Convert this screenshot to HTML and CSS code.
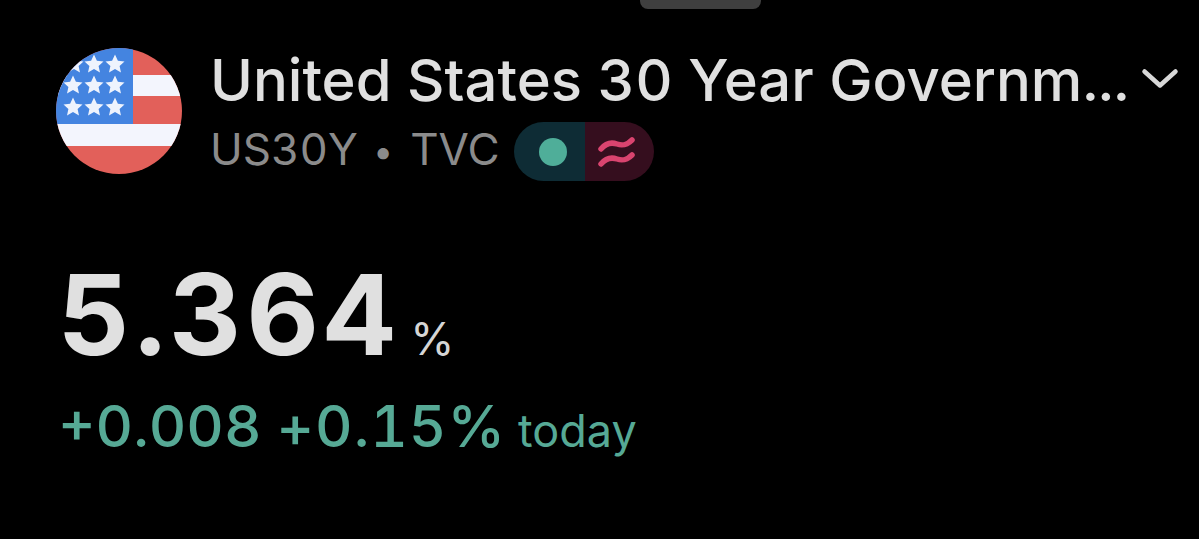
FILE: index.html
```html
<!DOCTYPE html>
<html lang="en">
<head>
<meta charset="utf-8">
<title>US30Y</title>
<link rel="stylesheet" href="styles.css">
</head>
<body>
<div class="handle"></div>
<header class="head">
  <svg class="flag" viewBox="0 0 126 126" aria-hidden="true">
    <defs><clipPath id="c"><circle cx="63" cy="63" r="63"/></clipPath></defs>
    <g clip-path="url(#c)">
      <rect width="126" height="126" fill="#e2605a"/>
      <rect x="0" y="27" width="126" height="21" fill="#f3f5fd"/>
      <rect x="0" y="76" width="126" height="22" fill="#f3f5fd"/>
      <rect width="77" height="76" fill="#4484e0"/>
      <g fill="#eef3fd">
        <path id="s" d="M38 6.5l2.9 6.2 6.6.7-4.9 4.5 1.4 6.6-6-3.4-6 3.4 1.4-6.6-4.9-4.5 6.6-.7z"/>
        <use href="#s" x="21"/><use href="#s" x="-20"/>
        <use href="#s" y="21"/><use href="#s" x="21" y="21"/><use href="#s" x="-21" y="21"/>
        <use href="#s" y="43"/><use href="#s" x="21" y="43"/><use href="#s" x="-21" y="43"/>
      </g>
    </g>
  </svg>
  <div class="titles">
    <div class="title-row">
      <h1 class="title">United States 30 Year Governm...</h1>
      <svg class="chev" viewBox="0 0 38 22" aria-hidden="true"><path d="M3.5 3.5L19 17.5 34.5 3.5"/></svg>
    </div>
    <div class="meta">
      <span class="sym">US30Y</span><span class="dot">•</span><span class="sym">TVC</span>
      <span class="pill">
        <span class="pill-l"><i class="led"></i></span>
        <span class="pill-r">
          <svg class="wave" viewBox="0 0 37 31" aria-hidden="true">
            <path d="M3 13c5-6 10-7 16-5s10 1 15-4"/>
            <path d="M3 28c5-6 10-7 16-5s10 1 15-4"/>
          </svg>
        </span>
      </span>
    </div>
  </div>
</header>
<section class="quote">
  <div class="price"><span class="val">5.364</span><span class="unit">%</span></div>
  <div class="chg"><span>+0.008</span><span class="pct">+0.15%</span><span class="today">today</span></div>
</section>
</body>
</html>
```
FILE: styles.css
```css
* { box-sizing: border-box; }
html, body { margin: 0; height: 100%; }
body {
  background: #000;
  font-family: Inter, "Liberation Sans", sans-serif;
  font-variant-numeric: tabular-nums;
  overflow: hidden;
  display: flex;
  flex-direction: column;
}
.handle {
  width: 121px;
  height: 9px;
  margin-left: 640px;
  background: #3f3f3f;
  border-radius: 0 0 8px 8px;
  flex: none;
}
.head {
  display: flex;
  gap: 28px;
  margin: 39px 0 0 56px;
  align-items: flex-start;
}
.flag { width: 126px; height: 126px; flex: none; }
.titles { display: flex; flex-direction: column; }
.title-row { display: flex; align-items: center; gap: 12px; margin-top: -2px; }
.title {
  margin: 0;
  font-size: 58px;
  line-height: 68px;
  font-weight: 500;
  color: #e0e0e0;
  white-space: nowrap;
}
.chev { width: 38px; height: 22px; margin-bottom: 2px; flex: none; }
.chev path { fill: none; stroke: #d8d8d8; stroke-width: 4.5; stroke-linecap: round; stroke-linejoin: round; }
.meta {
  display: flex;
  align-items: center;
  margin-top: 6px;
  font-size: 44px;
  line-height: 59px;
  color: #8b8b8b;
}
.sym { margin-bottom: 4px; }
.dot { font-size: 36px; margin: 0 17px 0 15px; }
.pill {
  display: flex;
  height: 59px;
  margin-left: 14px;
  border-radius: 30px;
  overflow: hidden;
}
.pill-l {
  width: 71px;
  background: #0e2c35;
  display: flex;
  align-items: center;
  justify-content: center;
  padding-left: 8px;
}
.led { width: 28px; height: 28px; border-radius: 50%; background: #4fae99; }
.pill-r {
  width: 69px;
  background: #350e1e;
  display: flex;
  align-items: center;
  padding-left: 13px;
}
.wave { width: 37px; height: 31px; }
.wave path { fill: none; stroke: #d9446f; stroke-width: 5.5; stroke-linecap: round; }
.quote { margin: 71px 0 0 58px; }
.price { display: flex; align-items: baseline; gap: 10px; }
.val { font-size: 112px; line-height: 120px; font-weight: 700; letter-spacing: 4.5px; color: #e0e0e0; }
.unit { font-size: 45px; color: #d5d5d5; }
.chg {
  display: flex;
  align-items: baseline;
  gap: 15px;
  font-size: 58px;
  line-height: 66px;
  font-weight: 500;
  color: #56a995;
  margin-top: 19px;
}
.pct { letter-spacing: 1px; }
.today { font-size: 45px; font-weight: 400; margin-left: -3px; }
```
